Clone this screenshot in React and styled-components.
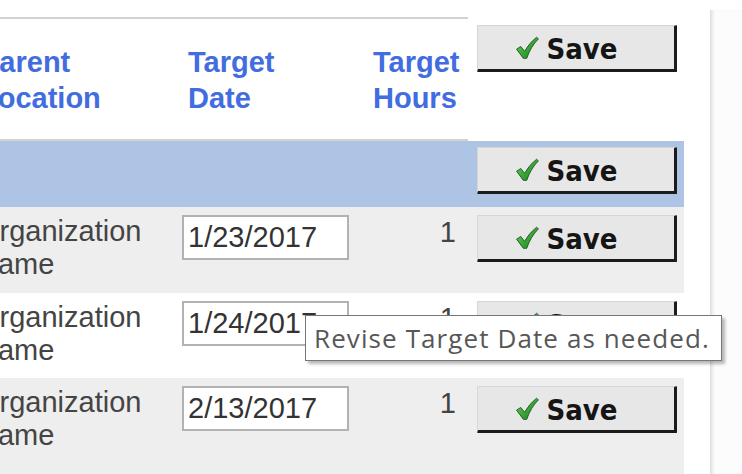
import React from "react";
import styled, { createGlobalStyle } from "styled-components";

const GlobalStyle = createGlobalStyle`
  html, body {
    margin: 0;
    padding: 0;
    background: #ffffff;
    overflow: hidden;
  }
  body {
    font-family: "Liberation Sans", Arial, sans-serif;
  }
`;

const tones = {
  white: "#ffffff",
  blue: "#adc4e4",
  gray: "#eeeeee",
};

const rows = [
  { date: "1/23/2017", hours: 1, tone: "gray", height: 86 },
  { date: "1/24/2017", hours: 1, tone: "white", height: 85 },
  { date: "2/13/2017", hours: 1, tone: "gray", height: 110 },
];

const CheckIcon = () => (
  <svg width="23" height="24" viewBox="0 0 24 24">
    <defs>
      <linearGradient id="chk" x1="0" y1="0" x2="1" y2="1">
        <stop offset="0" stopColor="#63d653" />
        <stop offset="1" stopColor="#157a1c" />
      </linearGradient>
    </defs>
    <path
      d="M0.6 13.2 L5 10.4 L8.9 15.4 Q14 6.5 21.4 0.8 L23.4 2.4 Q15.4 10.5 11.2 22.8 L7.6 22.8 Z"
      fill="url(#chk)"
      stroke="#1a4f20"
      strokeWidth="0.9"
      strokeLinejoin="round"
    />
  </svg>
);

const SaveButton = () => (
  <Button type="button">
    <CheckIcon />
    <span>Save</span>
  </Button>
);

const App = () => {
  return (
    <Page>
      <GlobalStyle />
      <Main>
        <Row $tone="white" $h={124}>
          <HeadCell>Parent<br />Location</HeadCell>
          <HeadCell $pad={12}>Target<br />Date</HeadCell>
          <HeadCell $pad={8}>Target<br />Hours</HeadCell>
          <ActionCell $top={8}><SaveButton /></ActionCell>
        </Row>

        <Row $tone="blue" $h={66}>
          <Cell />
          <Cell />
          <Cell />
          <ActionCell $top={6}><SaveButton /></ActionCell>
        </Row>

        {rows.map((r, i) => (
          <Row key={i} $tone={r.tone} $h={r.height}>
            <NameCell>Organization<br />Name</NameCell>
            <Cell $pad={6}>
              <DateInput readOnly defaultValue={r.date} />
            </Cell>
            <HoursCell>{r.hours}</HoursCell>
            <ActionCell $top={8}><SaveButton /></ActionCell>
          </Row>
        ))}
      </Main>
      <Sidebar />
      <Tooltip>Revise Target Date as needed.</Tooltip>
    </Page>
  );
};

const Page = styled.div`
  position: relative;
  display: flex;
  width: 742px;
  height: 474px;
  overflow: hidden;
  background: #ffffff;
`;

const Main = styled.div`
  width: 710px;
  padding-top: 17px;
  flex-shrink: 0;
`;

const Sidebar = styled.div`
  flex: 1;
  margin-top: 10px;
  background: #fcfcfc;
  border-left: 1px solid #dedede;
  box-shadow: inset 3px 0 3px -1px rgba(0, 0, 0, 0.09);
`;

const Row = styled.div`
  display: grid;
  grid-template-columns: 196px 189px 103px 216px;
  margin-left: -20px;
  width: 704px;
  height: ${({ $h }) => $h}px;
  box-sizing: border-box;
  background: ${({ $tone }) => tones[$tone]};
`;

const HeadCell = styled.div`
  box-sizing: border-box;
  border-top: 2px solid #d2d2d2;
  border-bottom: 2px solid #d2d2d2;
  padding: 25px 0 0 ${({ $pad }) => $pad || 0}px;
  font-size: 29px;
  font-weight: bold;
  line-height: 36px;
  color: #416de0;
  white-space: nowrap;
`;

const Cell = styled.div`
  padding: 8px 0 0 ${({ $pad }) => $pad || 0}px;
  font-size: 29px;
  line-height: 33px;
  color: #444444;
  white-space: nowrap;
`;

const NameCell = styled(Cell)`
  margin-left: -3px;
`;

const HoursCell = styled(Cell)`
  padding: 9px 12px 0 0;
  text-align: right;
`;

const ActionCell = styled.div`
  padding: ${({ $top }) => $top}px 0 0 9px;
`;

const DateInput = styled.input`
  box-sizing: border-box;
  width: 167px;
  height: 45px;
  margin: 0;
  padding: 0 0 0 4px;
  border: 2px solid #b2b2b2;
  background: #ffffff;
  font-family: "Liberation Sans", Arial, sans-serif;
  font-size: 29px;
  color: #333333;
  outline: none;
`;

const Button = styled.button`
  box-sizing: border-box;
  display: flex;
  align-items: center;
  justify-content: center;
  gap: 7px;
  width: 200px;
  height: 47px;
  margin: 0;
  padding: 3px 18px 0 0;
  background: #e7e7e7;
  border-top: 1px solid #d6d6d6;
  border-left: 1px solid #d6d6d6;
  border-right: 3px solid #1b1b1b;
  border-bottom: 3px solid #1b1b1b;
  border-radius: 1px;
  font-family: "DejaVu Sans Condensed", "DejaVu Sans", sans-serif;
  font-stretch: condensed;
  font-size: 29px;
  font-weight: bold;
  color: #151515;
  cursor: pointer;

  svg {
    margin-top: -3px;
  }

  span {
    line-height: 1;
  }
`;

const Tooltip = styled.div`
  position: absolute;
  left: 305px;
  top: 315px;
  box-sizing: border-box;
  width: 417px;
  height: 46px;
  padding: 0 0 0 8px;
  display: flex;
  align-items: center;
  background: #ffffff;
  border: 1px solid #767676;
  box-shadow: 3px 3px 3px rgba(0, 0, 0, 0.28);
  font-family: "Open Sans", "Noto Sans", sans-serif;
  font-size: 26px;
  letter-spacing: 1.1px;
  color: #575757;
  white-space: nowrap;
`;

export default App;
